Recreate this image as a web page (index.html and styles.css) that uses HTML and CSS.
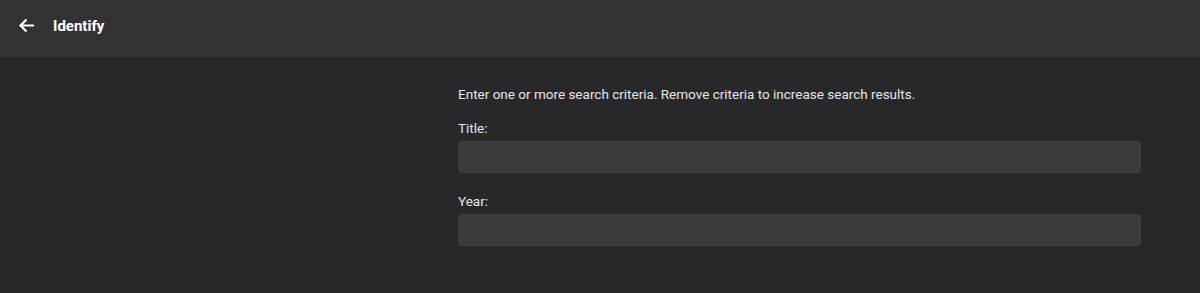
FILE: index.html
```html
<!DOCTYPE html>
<html lang="en">
  <head>
    <meta charset="UTF-8" />
    <meta name="viewport" content="width=device-width, initial-scale=1.0" />
    <title>Identify</title>
    <link rel="stylesheet" href="styles.css">
  </head>
  <body>
    <!-- Header -->
    <div class="header">
      <button class="back-btn" aria-label="Back">
        <svg width="17" height="15" viewBox="0 0 17 15">
          <path d="M16 7.5H2.5M8.5 1.5L2.5 7.5l6 6" fill="none" stroke="#fff" stroke-width="2.2" />
        </svg>
      </button>
      <h1>Identify</h1>
    </div>

    <!-- Search form -->
    <div class="page">
      <div class="spacer"></div>
      <form class="search-form">
        <p class="hint">Enter one or more search criteria. Remove criteria to increase search results.</p>

        <div class="field">
          <label for="title">Title:</label>
          <input id="title" type="text" />
        </div>

        <div class="field">
          <label for="year">Year:</label>
          <input id="year" type="text" />
        </div>
      </form>
    </div>
  </body>
</html>
```

FILE: styles.css
```css
* {
  margin: 0;
  padding: 0;
  box-sizing: border-box;
}

body {
  font-family: Roboto, "Noto Sans", sans-serif;
  background-color: #28282a;
  color: #e6e6e6;
  height: 293px;
  overflow: hidden;
}

.header {
  height: 57px;
  background: #323234;
  display: flex;
  align-items: center;
  padding: 0 0 0 17px;
  gap: 18px;
}

.back-btn {
  background: none;
  border: none;
  width: 18px;
  height: 16px;
  display: flex;
  align-items: center;
  justify-content: center;
  margin-top: -6px;
}

.header h1 {
  font-size: 15px;
  font-weight: 700;
  color: #ffffff;
  margin-top: -6px;
}

.page {
  display: grid;
  grid-template-columns: 458px 1fr;
  padding-right: 59px;
}

.search-form {
  padding-top: 29px;
}

.hint {
  font-size: 13.5px;
  line-height: 17px;
  margin-bottom: 17px;
}

.field {
  margin-bottom: 20px;
}

.field label {
  display: block;
  font-size: 13.5px;
  line-height: 17px;
  margin-bottom: 4px;
}

.field input {
  width: 100%;
  height: 32px;
  background: #3a3a3f;
  border: 1px solid #3e3e43;
  border-radius: 4px;
  color: #fff;
  outline: none;
}
```
